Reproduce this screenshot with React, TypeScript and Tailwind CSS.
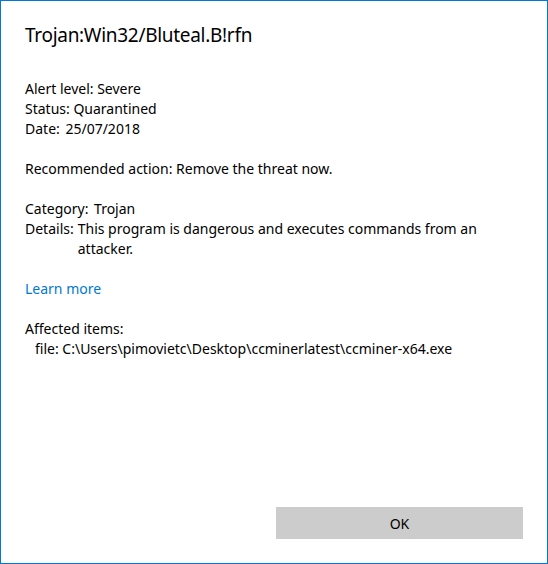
import React from 'react';

const font = { fontFamily: '"Noto Sans", "Open Sans", sans-serif' };

export default function App() {
  return (
    <div
      className="w-[548px] h-[564px] bg-white border border-[#0078d7] flex flex-col text-black"
      style={font}
    >
      <div className="pl-[24px] pr-[24px] pt-[20px] flex-1">
        <h1 className="text-[19px] leading-[28px] tracking-[-0.3px]">Trojan:Win32/Bluteal.B!rfn</h1>

        <div className="mt-[30px] text-[14px] leading-[20px]">
          <p>Alert level: Severe</p>
          <p>Status: Quarantined</p>
          <p>Date: <span className="ml-[2px]">25/07/2018</span></p>

          <p className="mt-[20px]">Recommended action: Remove the threat now.</p>

          <p className="mt-[20px]">Category: <span className="ml-[2px]">Trojan</span></p>
          <div className="flex">
            <span className="shrink-0 pr-[4px]">Details:</span>
            <span className="w-[410px]">This program is dangerous and executes commands from an attacker.</span>
          </div>

          <a className="block mt-[20px] text-[#0078d7]">Learn more</a>

          <p className="mt-[20px]">Affected items:</p>
          <p className="pl-[10px]">file: C:\Users\pimovietc\Desktop\ccminerlatest\ccminer-x64.exe</p>
        </div>
      </div>

      <div className="flex justify-end pr-[24px] pb-[24px]">
        <button className="w-[247px] h-[32px] bg-[#cccccc] text-[14px]">OK</button>
      </div>
    </div>
  );
}
